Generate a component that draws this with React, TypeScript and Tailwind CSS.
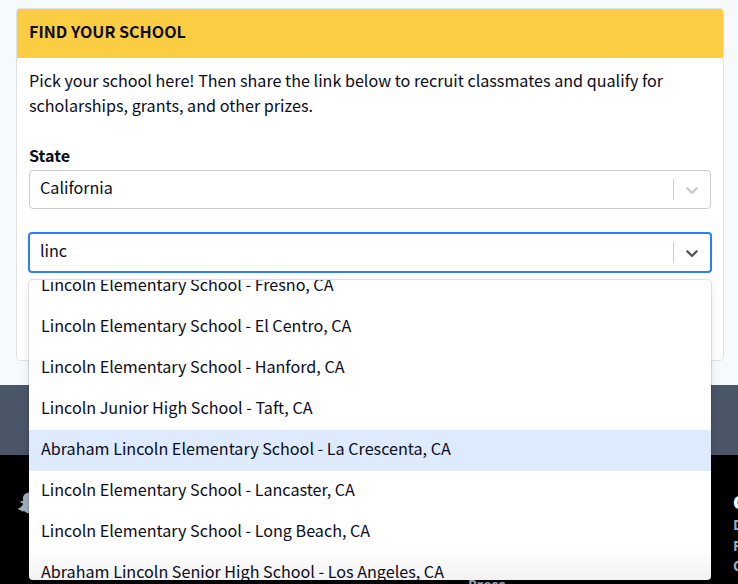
import React from "react";
import { FaSnapchatGhost } from "react-icons/fa";

const schools = [
  "Lincoln Elementary School - Fresno, CA",
  "Lincoln Elementary School - El Centro, CA",
  "Lincoln Elementary School - Hanford, CA",
  "Lincoln Junior High School - Taft, CA",
  "Abraham Lincoln Elementary School - La Crescenta, CA",
  "Lincoln Elementary School - Lancaster, CA",
  "Lincoln Elementary School - Long Beach, CA",
  "Abraham Lincoln Senior High School - Los Angeles, CA",
];

function Indicator({ className }: { className: string }) {
  return (
    <div className="flex h-full items-center">
      <span className="h-[21px] w-px bg-[#cccccc]" />
      <svg viewBox="0 0 20 20" className={`mx-2 size-5 fill-current ${className}`}>
        <path d="M4.516 7.548c0.436-0.446 1.043-0.481 1.576 0l3.908 3.747 3.908-3.747c0.533-0.481 1.141-0.446 1.574 0 0.436 0.445 0.408 1.197 0 1.615-0.406 0.418-4.695 4.502-4.695 4.502-0.217 0.223-0.502 0.335-0.787 0.335s-0.57-0.112-0.789-0.335c0 0-4.287-4.084-4.695-4.502s-0.436-1.17 0-1.615z" />
      </svg>
    </div>
  );
}

export default function App() {
  return (
    <div className="relative h-[584px] w-[738px] overflow-hidden bg-[#f6fafd] font-['Noto_Sans_CJK_SC',sans-serif] text-[16.15px] text-[#0b0c1b]">
      <main className="h-[385px] px-4 pt-2">
        <section className="h-[353px] w-[708px] overflow-hidden rounded border border-[#dfe3e6] bg-white">
          <h2 className="flex h-[49px] items-center bg-[#fbcd43] px-3 pb-1.5 text-[16.1px] font-bold leading-6">FIND YOUR SCHOOL</h2>
          <div className="px-3 pt-2.5">
            <p className="leading-[25px]">
              Pick your school here! Then share the link below to recruit classmates and qualify for
              <br />
              scholarships, grants, and other prizes.
            </p>
            <div className="mt-[25px] font-bold leading-[25px]">State</div>
            <div className="mt-0.5 flex h-[39px] w-[682px] items-center justify-between rounded border border-[#cccccc] pl-2.5">
              <span className="pb-1">California</span>
              <Indicator className="text-[#cccccc]" />
            </div>
            <div className="-ml-px mt-[23px] flex h-[41px] w-[684px] items-center justify-between rounded border-2 border-[#2e7dfb] pl-2.5">
              <span className="pb-1">linc</span>
              <Indicator className="text-[#555555]" />
            </div>
          </div>
        </section>
      </main>
      <div className="h-[70px] bg-[#4a5568]" />
      <footer className="flex h-[129px] overflow-hidden bg-black text-[14px] font-bold text-[#a0aec0]">
        <FaSnapchatGhost className="ml-[18px] mt-[37px] size-[22px] shrink-0" />
        <span className="ml-[428px] mt-[120px] w-[265px] shrink-0 font-['Open_Sans',sans-serif] leading-5">Press</span>
        <div className="mt-[34px] shrink-0 font-['Open_Sans',sans-serif] leading-[20.5px]">
          <div className="text-[18px] font-extrabold leading-[26px] text-white">C</div>
          <div>D</div>
          <div>F</div>
          <div>C</div>
        </div>
      </footer>
      <div className="absolute left-[29px] top-[280px] h-[300px] w-[682px] overflow-hidden rounded bg-white shadow-[0_0_0_1px_rgba(0,0,0,0.1),0_4px_11px_rgba(0,0,0,0.1)]">
        <ul className="-mt-[14px]">
          {schools.map((s) => (
            <li
              key={s}
              className={`flex h-[41px] items-center px-3 pb-1 ${s.includes("Crescenta") ? "bg-[#deebff]" : ""}`}
            >
              {s}
            </li>
          ))}
        </ul>
        <div className="absolute inset-x-0 bottom-0 h-8 bg-gradient-to-b from-transparent to-black/5" />
      </div>
    </div>
  );
}
